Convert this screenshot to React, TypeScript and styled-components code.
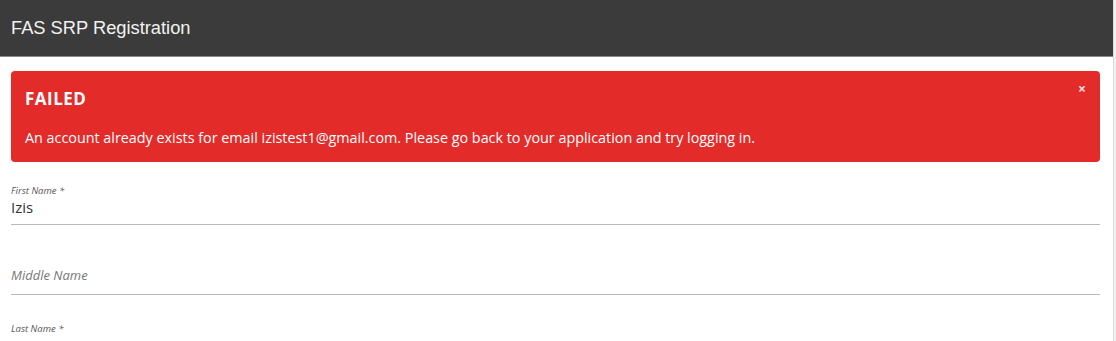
import React from "react";
import styled, { createGlobalStyle } from "styled-components";

const GlobalStyle = createGlobalStyle`
  html, body {
    margin: 0;
    padding: 0;
    background: #f1f1f1;
  }
  body {
    font-family: "Open Sans", "Liberation Sans", Arial, sans-serif;
  }
`;

type Field = {
  label: string;
  required?: boolean;
  value?: string;
};

const fields: Field[] = [
  { label: "First Name", required: true, value: "Izis" },
  { label: "Middle Name" },
  { label: "Last Name", required: true, value: "" },
];

export default function App() {
  return (
    <>
      <GlobalStyle />
      <SPage>
        <SHeader>FAS SRP Registration</SHeader>
        <SContent>
          <SAlert>
            <SAlertTitle>FAILED</SAlertTitle>
            <SAlertText>
              An account already exists for email izistest1@gmail.com. Please go back to your
              application and try logging in.
            </SAlertText>
            <SClose aria-label="close">×</SClose>
          </SAlert>
          {fields.map((f, i) => (
            <SField key={f.label} $first={i === 0} $last={i === fields.length - 1}>
              {f.value !== undefined ? (
                <>
                  <SLabel>
                    {f.label}
                    {f.required && " *"}
                  </SLabel>
                  <SValue>{f.value}</SValue>
                </>
              ) : (
                <SPlaceholder>{f.label}</SPlaceholder>
              )}
            </SField>
          ))}
        </SContent>
      </SPage>
    </>
  );
}

const SPage = styled.div`
  width: 1113px;
  height: 341px;
  overflow: hidden;
  background: #ffffff;
  border-right: 1px solid #dcdcdc;
`;

const SHeader = styled.div`
  height: 57px;
  box-sizing: border-box;
  background: #3b3b3b;
  border-bottom: 1px solid #8a8a8a;
  color: #f2f2f2;
  font-family: "Liberation Sans", Arial, sans-serif;
  font-size: 18.3px;
  line-height: 55px;
  padding-left: 11px;
`;

const SContent = styled.div`
  padding: 14px 13px 0 11px;
`;

const SAlert = styled.div`
  position: relative;
  background: #e32b29;
  border-radius: 4px;
  color: #ffffff;
  padding: 17px 40px 15px 14px;
  height: 91px;
  box-sizing: border-box;
`;

const SAlertTitle = styled.div`
  font-size: 17px;
  font-weight: 700;
  line-height: 22px;
  letter-spacing: 0.5px;
`;

const SAlertText = styled.div`
  margin-top: 18px;
  font-size: 14.35px;
  line-height: 20px;
`;

const SClose = styled.span`
  position: absolute;
  top: 8px;
  right: 14px;
  font-size: 14px;
  font-weight: 700;
  color: #f6dede;
`;

const SField = styled.div<{ $first?: boolean; $last?: boolean }>`
  height: ${(p) => (p.$first ? "63px" : "70px")};
  box-sizing: border-box;
  border-bottom: ${(p) => (p.$last ? "none" : "1px solid #b9b9b9")};
  padding-top: ${(p) => (p.$first ? "23px" : "28px")};
  display: flex;
  flex-direction: column;
`;

const SLabel = styled.div`
  font-size: 9.5px;
  font-style: italic;
  color: #555555;
  line-height: 12px;
`;

const SValue = styled.div`
  font-size: 15px;
  color: #333333;
  line-height: 20px;
`;

const SPlaceholder = styled.div`
  font-size: 13px;
  font-style: italic;
  color: #777777;
  margin-top: 13px;
  line-height: 18px;
`;
